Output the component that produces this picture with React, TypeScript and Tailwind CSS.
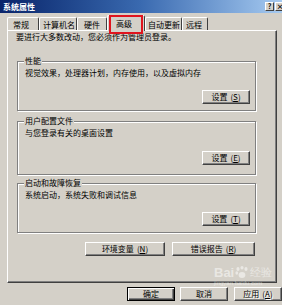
import React from "react";

const btn =
  "h-[14px] flex items-center justify-center bg-[#d4d0c8] border border-t-white border-l-white border-r-[#404040] border-b-[#404040] shadow-[inset_-1px_-1px_0_#808080] text-[8px] leading-[10px] text-black";

const tabs = [
  { label: "常规", cls: "w-[32px] pl-[5px]" },
  { label: "计算机名", cls: "w-[38px] pl-[3px]" },
  { label: "硬件", cls: "w-[30px] pl-[6px]" },
  { label: "高级", cls: "w-[38px] pl-[8px]", active: true },
  { label: "自动更新", cls: "w-[37px] pl-[2px]" },
  { label: "远程", cls: "w-[26px] pl-[3px]" },
];

function Key({ k }: { k: string }) {
  return (
    <span className="ml-[3px]">
      (<u>{k}</u>)
    </span>
  );
}

export default function App() {
  return (
    <div className="relative w-[282px] h-[305px] overflow-hidden bg-[#d4d0c8] text-black text-[8px] leading-[10px] font-['Noto_Sans_CJK_SC','Noto_Sans',sans-serif]">
      {/* title bar */}
      <div className="h-[13px] flex items-center justify-between pl-[3px] bg-linear-to-r from-[#0a246a] via-[#3a6ab0] to-[#a6caf0]">
        <span className="text-white font-bold text-[8px] leading-[10px]">系统属性</span>
        <div className="flex gap-[1px] -mr-[3px]">
          <span className="w-[9px] h-[9px] flex items-center justify-center bg-[#d4d0c8] border border-t-white border-l-white border-r-[#404040] border-b-[#404040] text-[7px] leading-none font-bold">
            ?
          </span>
          <span className="w-[10px] h-[9px] flex items-center justify-center bg-[#d4d0c8] border border-t-white border-l-white border-r-[#404040] border-b-[#404040] text-[7px] leading-none font-bold">
            ×
          </span>
        </div>
      </div>

      {/* tabs */}
      <div className="relative z-10 h-[17px] flex items-end pl-[7px]">
        {tabs.map((t) =>
          t.active ? (
            <div
              key={t.label}
              className={`${t.cls} h-[16px] -mb-[1px] pt-[3px] bg-[#d4d0c8] border-t border-l border-r border-t-white border-l-white border-r-[#404040] rounded-t-[2px]`}
            >
              {t.label}
            </div>
          ) : (
            <div
              key={t.label}
              className={`${t.cls} h-[13px] pt-[2px] border-t border-l border-r border-t-white border-l-white border-r-[#404040] rounded-t-[2px]`}
            >
              {t.label}
            </div>
          )
        )}
      </div>

      {/* annotation box */}
      <div className="absolute left-[109px] top-[15px] w-[34px] h-[19px] border-2 border-[#e0141e] z-20" />

      {/* panel */}
      <div className="ml-[7px] w-[270px] h-[253px] flex flex-col border border-t-white border-l-white border-r-[#404040] border-b-[#404040] shadow-[inset_-1px_-1px_0_#808080]">
        <p className="mt-[1px] pl-[8px]">要进行大多数改动，您必须作为管理员登录。</p>

        <fieldset className="mt-[14px] ml-[9px] w-[239px] border border-[#808080] shadow-[1px_1px_0_white,inset_1px_1px_0_white] pl-[4px] pr-[5px] pt-[2px] pb-[6px]">
          <legend className="ml-[2px] px-[1px] bg-[#d4d0c8]">性能</legend>
          <p className="pl-[3px]">视觉效果，处理器计划，内存使用，以及虚拟内存</p>
          <div className="flex justify-end mt-[12px]">
            <button className={`${btn} w-[48px]`}>
              设置<Key k="S" />
            </button>
          </div>
        </fieldset>

        <fieldset className="mt-[5px] ml-[9px] w-[239px] border border-[#808080] shadow-[1px_1px_0_white,inset_1px_1px_0_white] pl-[4px] pr-[5px] pt-[2px] pb-[9px]">
          <legend className="ml-[2px] px-[1px] bg-[#d4d0c8]">用户配置文件</legend>
          <p className="pl-[3px]">与您登录有关的桌面设置</p>
          <div className="flex justify-end mt-[13px]">
            <button className={`${btn} w-[48px]`}>
              设置<Key k="E" />
            </button>
          </div>
        </fieldset>

        <fieldset className="mt-[3px] ml-[9px] w-[239px] border border-[#808080] shadow-[1px_1px_0_white,inset_1px_1px_0_white] pl-[4px] pr-[5px] pt-[2px] pb-[6px]">
          <legend className="ml-[2px] px-[1px] bg-[#d4d0c8]">启动和故障恢复</legend>
          <p className="pl-[3px]">系统启动，系统失败和调试信息</p>
          <div className="flex justify-end mt-[12px]">
            <button className={`${btn} w-[48px]`}>
              设置<Key k="T" />
            </button>
          </div>
        </fieldset>

        <div className="mt-[9px] ml-[77px] flex gap-[7px]">
          <button className={`${btn} w-[80px]`}>
            环境变量<Key k="N" />
          </button>
          <button className={`${btn} w-[83px]`}>
            错误报告<Key k="R" />
          </button>
        </div>
      </div>

      {/* dialog buttons */}
      <div className="mt-[4px] pl-[127px] flex gap-[5px]">
        <button className="w-[48px] h-[14px] flex items-center justify-center border border-black shadow-[inset_1px_1px_0_white,inset_-1px_-1px_0_#404040,inset_-2px_-2px_0_#808080] text-[8px] leading-[10px]">
          确定
        </button>
        <button className={`${btn} w-[48px]`}>取消</button>
        <button className={`${btn} w-[48px] ml-[1px] text-[#808080] [text-shadow:1px_1px_0_white]`}>
          应用<Key k="A" />
        </button>
      </div>

      {/* watermark */}
      <div className="absolute left-[214px] top-[266px] flex flex-col items-start text-white/50 pointer-events-none">
        <div className="flex items-end gap-[1px] font-['Liberation_Sans',sans-serif] text-[13px] leading-[13px] font-bold">
          <span>Bai</span>
          <svg width="14" height="13" viewBox="0 0 14 13" className="fill-white/50">
            <ellipse cx="3" cy="3" rx="1.6" ry="2" />
            <ellipse cx="7" cy="1.8" rx="1.6" ry="1.8" />
            <ellipse cx="11" cy="3" rx="1.6" ry="2" />
            <ellipse cx="1.8" cy="7" rx="1.4" ry="1.7" />
            <ellipse cx="7" cy="9" rx="3.4" ry="3" />
          </svg>
          <span className="text-[11px] font-normal">经验</span>
        </div>
        <span className="text-[6px] leading-[8px] font-['Liberation_Sans',sans-serif]">jingyan.baidu.com</span>
      </div>
    </div>
  );
}
